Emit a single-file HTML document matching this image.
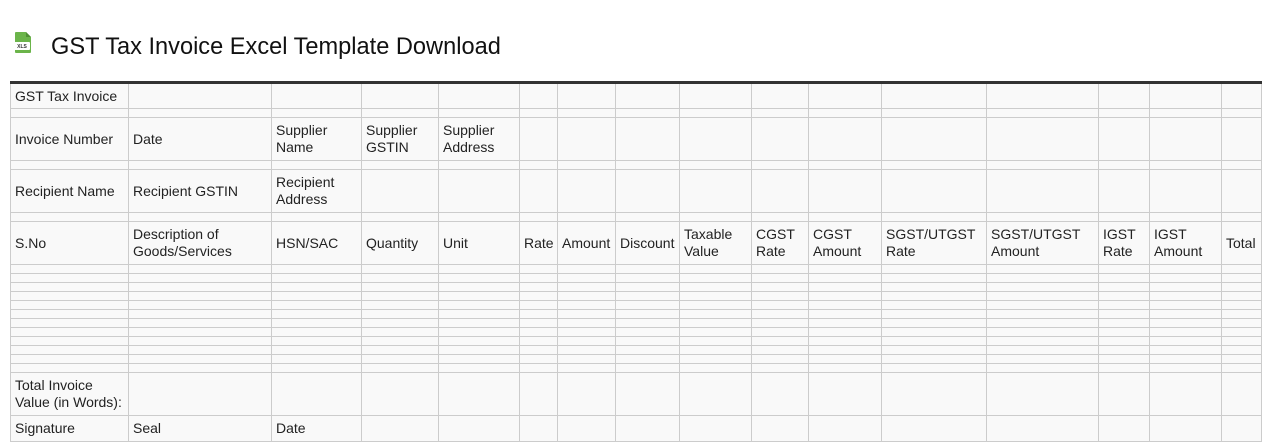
<!DOCTYPE html>
<html><head><style>
body{margin:0;background:#fff;font-family:"Liberation Sans",Arial,sans-serif;width:1262px;height:443px;overflow:hidden;position:relative}
h1{position:absolute;left:51px;top:33px;margin:0;font-size:23.6px;font-weight:normal;color:#111;line-height:28px}
.ic{position:absolute;left:12px;top:31px}
table{position:absolute;left:10px;top:81px;border-collapse:collapse;table-layout:fixed;border-top:3px solid #333;width:1251px}
td{border:1px solid #ccc;background:#f9f9f9;font-size:14px;color:#222;padding:0 4px;line-height:17px;vertical-align:middle;overflow:hidden}
tr.e td{height:8px;padding:0}
tr.t td{height:42px}
</style></head><body>
<svg class="ic" width="22" height="23" viewBox="0 0 22 23"><path d="M4 1h10l5 5v15a1 1 0 0 1-1 1H4a1 1 0 0 1-1-1V2a1 1 0 0 1 1-1z" fill="#6bb44a"/><path d="M14 1v5h5" fill="#4f8f34"/><rect x="2" y="11" width="16" height="8" fill="#fff" rx="1"/><text x="10" y="17" font-size="5" font-weight="bold" text-anchor="middle" fill="#333" font-family="Liberation Sans">XLS</text></svg>
<h1>GST Tax Invoice Excel Template Download</h1>
<table>
<colgroup><col style="width:118px"><col style="width:143px"><col style="width:90px"><col style="width:77px"><col style="width:81px"><col style="width:38px"><col style="width:58px"><col style="width:64px"><col style="width:72px"><col style="width:57px"><col style="width:73px"><col style="width:105px"><col style="width:112px"><col style="width:51px"><col style="width:72px"><col style="width:40px"></colgroup>
<tr><td style="height:24px">GST Tax Invoice</td><td></td><td></td><td></td><td></td><td></td><td></td><td></td><td></td><td></td><td></td><td></td><td></td><td></td><td></td><td></td></tr>
<tr class="e"><td></td><td></td><td></td><td></td><td></td><td></td><td></td><td></td><td></td><td></td><td></td><td></td><td></td><td></td><td></td><td></td></tr>
<tr class="t"><td>Invoice Number</td><td>Date</td><td>Supplier Name</td><td>Supplier GSTIN</td><td>Supplier Address</td><td></td><td></td><td></td><td></td><td></td><td></td><td></td><td></td><td></td><td></td><td></td></tr>
<tr class="e"><td></td><td></td><td></td><td></td><td></td><td></td><td></td><td></td><td></td><td></td><td></td><td></td><td></td><td></td><td></td><td></td></tr>
<tr class="t"><td>Recipient Name</td><td>Recipient GSTIN</td><td>Recipient Address</td><td></td><td></td><td></td><td></td><td></td><td></td><td></td><td></td><td></td><td></td><td></td><td></td><td></td></tr>
<tr class="e"><td></td><td></td><td></td><td></td><td></td><td></td><td></td><td></td><td></td><td></td><td></td><td></td><td></td><td></td><td></td><td></td></tr>
<tr class="t"><td>S.No</td><td>Description of Goods/Services</td><td>HSN/SAC</td><td>Quantity</td><td>Unit</td><td>Rate</td><td>Amount</td><td>Discount</td><td>Taxable Value</td><td>CGST Rate</td><td>CGST Amount</td><td>SGST/UTGST Rate</td><td>SGST/UTGST Amount</td><td>IGST Rate</td><td>IGST Amount</td><td>Total</td></tr>
<tr class="e"><td></td><td></td><td></td><td></td><td></td><td></td><td></td><td></td><td></td><td></td><td></td><td></td><td></td><td></td><td></td><td></td></tr>
<tr class="e"><td></td><td></td><td></td><td></td><td></td><td></td><td></td><td></td><td></td><td></td><td></td><td></td><td></td><td></td><td></td><td></td></tr>
<tr class="e"><td></td><td></td><td></td><td></td><td></td><td></td><td></td><td></td><td></td><td></td><td></td><td></td><td></td><td></td><td></td><td></td></tr>
<tr class="e"><td></td><td></td><td></td><td></td><td></td><td></td><td></td><td></td><td></td><td></td><td></td><td></td><td></td><td></td><td></td><td></td></tr>
<tr class="e"><td></td><td></td><td></td><td></td><td></td><td></td><td></td><td></td><td></td><td></td><td></td><td></td><td></td><td></td><td></td><td></td></tr>
<tr class="e"><td></td><td></td><td></td><td></td><td></td><td></td><td></td><td></td><td></td><td></td><td></td><td></td><td></td><td></td><td></td><td></td></tr>
<tr class="e"><td></td><td></td><td></td><td></td><td></td><td></td><td></td><td></td><td></td><td></td><td></td><td></td><td></td><td></td><td></td><td></td></tr>
<tr class="e"><td></td><td></td><td></td><td></td><td></td><td></td><td></td><td></td><td></td><td></td><td></td><td></td><td></td><td></td><td></td><td></td></tr>
<tr class="e"><td></td><td></td><td></td><td></td><td></td><td></td><td></td><td></td><td></td><td></td><td></td><td></td><td></td><td></td><td></td><td></td></tr>
<tr class="e"><td></td><td></td><td></td><td></td><td></td><td></td><td></td><td></td><td></td><td></td><td></td><td></td><td></td><td></td><td></td><td></td></tr>
<tr class="e"><td></td><td></td><td></td><td></td><td></td><td></td><td></td><td></td><td></td><td></td><td></td><td></td><td></td><td></td><td></td><td></td></tr>
<tr class="e"><td></td><td></td><td></td><td></td><td></td><td></td><td></td><td></td><td></td><td></td><td></td><td></td><td></td><td></td><td></td><td></td></tr>
<tr class="t"><td>Total Invoice Value (in Words):</td><td></td><td></td><td></td><td></td><td></td><td></td><td></td><td></td><td></td><td></td><td></td><td></td><td></td><td></td><td></td></tr>
<tr><td style="height:25px">Signature</td><td>Seal</td><td>Date</td><td></td><td></td><td></td><td></td><td></td><td></td><td></td><td></td><td></td><td></td><td></td><td></td><td></td></tr>
</table>
</body></html>
